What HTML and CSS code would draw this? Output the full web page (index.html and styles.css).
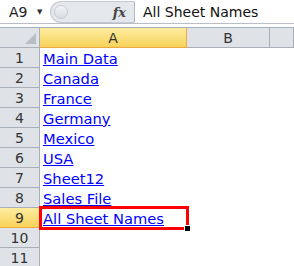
FILE: index.html
```html
<!DOCTYPE html>
<html lang="en">
<head>
    <meta charset="UTF-8">
    <title>All Sheet Names</title>
    <link rel="stylesheet" href="styles.css">
</head>
<body>
    <div class="formula-bar">
        <div class="name-box">
            <span class="cell-ref">A9</span>
            <span class="drop">&#9660;</span>
        </div>
        <div class="bar-mid">
            <span class="knob"></span>
            <span class="fx">fx</span>
        </div>
        <div class="bar-input">All Sheet Names</div>
    </div>
    <div class="bar-gap"></div>

    <div class="sheet">
        <div class="corner"></div>
        <div class="col-head active">A</div>
        <div class="col-head">B</div>
        <div class="col-head"></div>

        <div class="row-head">1</div><div class="cell"><a href="#">Main Data</a></div><div class="cell"></div><div class="cell"></div>
        <div class="row-head">2</div><div class="cell"><a href="#">Canada</a></div><div class="cell"></div><div class="cell"></div>
        <div class="row-head">3</div><div class="cell"><a href="#">France</a></div><div class="cell"></div><div class="cell"></div>
        <div class="row-head">4</div><div class="cell"><a href="#">Germany</a></div><div class="cell"></div><div class="cell"></div>
        <div class="row-head">5</div><div class="cell"><a href="#">Mexico</a></div><div class="cell"></div><div class="cell"></div>
        <div class="row-head">6</div><div class="cell"><a href="#">USA</a></div><div class="cell"></div><div class="cell"></div>
        <div class="row-head">7</div><div class="cell"><a href="#">Sheet12</a></div><div class="cell"></div><div class="cell"></div>
        <div class="row-head">8</div><div class="cell"><a href="#">Sales File</a></div><div class="cell"></div><div class="cell"></div>
        <div class="row-head active">9</div><div class="cell selected"><a href="#">All Sheet Names</a></div><div class="cell"></div><div class="cell"></div>
        <div class="row-head">10</div><div class="cell"></div><div class="cell"></div><div class="cell"></div>
        <div class="row-head">11</div><div class="cell"></div><div class="cell"></div><div class="cell"></div>
    </div>
</body>
</html>
```

FILE: styles.css
```css
* {
    margin: 0;
    padding: 0;
    box-sizing: border-box;
}

body {
    width: 294px;
    height: 266px;
    overflow: hidden;
    background-color: #fff;
    font-family: 'DejaVu Sans', 'Liberation Sans', sans-serif;
    color: #222;
}

/* formula bar */
.formula-bar {
    display: flex;
    height: 24px;
    border-bottom: 1px solid #b9bec6;
}

.name-box {
    width: 50px;
    display: flex;
    align-items: center;
    padding-left: 9px;
    font-size: 14px;
}

.cell-ref {
    width: 28px;
}

.drop {
    font-size: 7px;
    color: #333;
}

.bar-mid {
    width: 85px;
    display: flex;
    align-items: center;
    justify-content: space-between;
    background-color: #e4e7eb;
    border-radius: 12px 0 0 12px;
    border: 1px solid #c5cad1;
    border-right: 1px solid #b3b9c1;
    padding: 0 8px 0 3px;
    margin-top: 1px;
}

.knob {
    width: 14px;
    height: 14px;
    border-radius: 50%;
    background: linear-gradient(#f4f5f7, #d6dae0);
    border: 1px solid #c7ccd3;
}

.fx {
    font-family: 'DejaVu Serif', 'Liberation Serif', serif;
    font-style: italic;
    font-weight: bold;
    font-size: 13px;
    color: #444;
}

.bar-input {
    flex: 1;
    display: flex;
    align-items: center;
    padding-left: 8px;
    font-size: 14px;
    color: #111;
}

.bar-gap {
    height: 4px;
    border-bottom: 1px solid #a9afb8;
}

/* grid */
.sheet {
    display: grid;
    grid-template-columns: 40px 147px 83px 1fr;
    grid-auto-rows: 20px;
}

.corner,
.col-head,
.row-head {
    background-color: #dfe3e8;
    border-right: 1px solid #a9afb8;
    border-bottom: 1px solid #a9afb8;
    display: flex;
    align-items: center;
    justify-content: center;
    font-size: 14px;
    color: #333;
}

.corner {
    position: relative;
}

.corner::after {
    content: "";
    position: absolute;
    right: 3px;
    bottom: 3px;
    border-left: 11px solid transparent;
    border-bottom: 11px solid #b8bec6;
}

.col-head.active,
.row-head.active {
    background: linear-gradient(#fdeca0, #f8d35a);
    border-color: #f0a840;
}

.row-head {
    padding-top: 1px;
}

.cell {
    display: flex;
    align-items: center;
    padding-left: 3px;
    font-size: 14.7px;
}

.cell a {
    color: #0000ff;
    text-decoration: underline;
}

.cell.selected {
    position: relative;
}

.cell.selected::before {
    content: "";
    position: absolute;
    left: -1px;
    top: -2px;
    right: -2px;
    bottom: -2px;
    border: 3px solid #ff0000;
}

.cell.selected::after {
    content: "";
    position: absolute;
    right: -4px;
    bottom: -4px;
    width: 5px;
    height: 5px;
    background-color: #000;
    border: 1px solid #fff;
}
```
